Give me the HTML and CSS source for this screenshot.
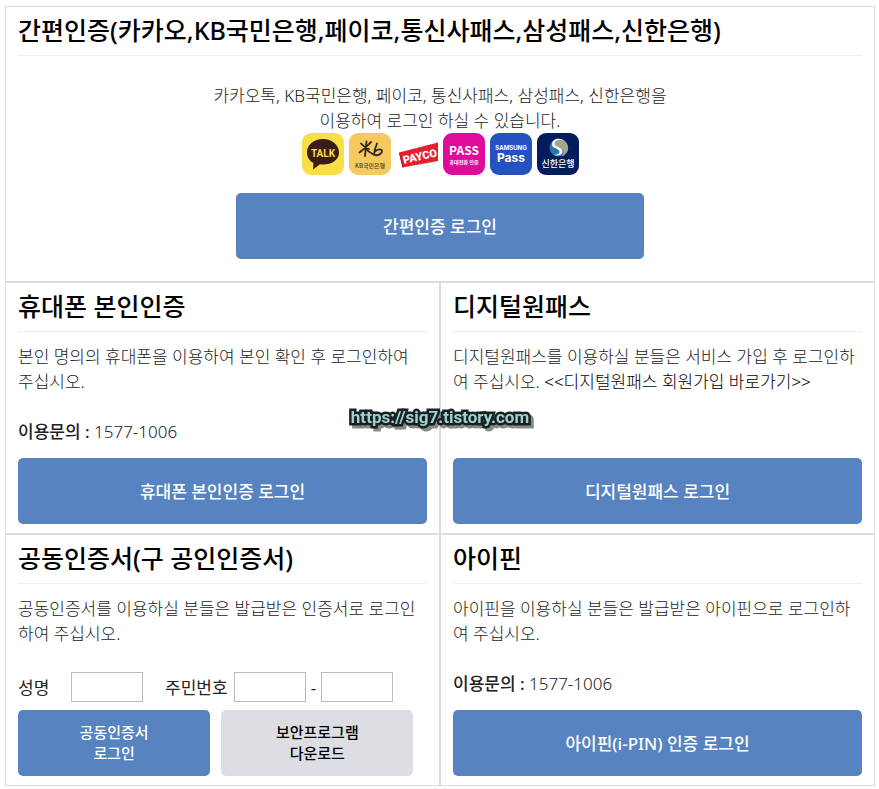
FILE: index.html
```html
<!DOCTYPE html>
<html lang="ko">
<head>
<meta charset="utf-8">
<meta name="viewport" content="width=device-width, initial-scale=1">
<title>로그인</title>
<link rel="stylesheet" href="styles.css">
</head>
<body>
<main class="login">
  <section class="card card-wide">
    <h2 class="title">간편인증(카카오,KB국민은행,페이코,통신사패스,삼성패스,신한은행)</h2>
    <p class="intro">카카오톡, KB국민은행, 페이코, 통신사패스, 삼성패스, 신한은행을<br>이용하여 로그인 하실 수 있습니다.</p>
    <div class="brands">
      <svg class="brand" viewBox="0 0 42 42" role="img" aria-label="카카오톡">
        <rect width="42" height="42" rx="9" fill="#f9df45"/>
        <path d="M21 6C12 6 5 11.500 5 19.500c0 4.800 2.600 8.400 6.500 10.600L11 36.500l7-5.200c1 .1 2 .2 3 .2 9 0 16-4.500 16-12S30 6 21 6z" fill="#3b1c1c"/>
        <text class="kakao" x="21" y="24">TALK</text>
      </svg>
      <svg class="brand" viewBox="0 0 42 42" role="img" aria-label="KB국민은행">
        <rect width="42" height="42" rx="9" fill="#f6c95f"/>
        <g fill="none" stroke="#2b2721" stroke-width="1.800" stroke-linecap="round">
          <path d="M12 10.500C14 13 17 15 20 16M22 9C19 12 16 15.500 10.500 19.500M17.500 8.500L16 23"/>
          <path d="M16.500 15C18.500 18 21 20 24.500 21.500"/>
          <path d="M28 10.500C26.500 14 25.500 17 25 21.500C28 23.500 33 21 33 18C33 15.500 28.500 16 26 18.500"/>
        </g>
        <text class="kb" x="21" y="35">KB국민은행</text>
      </svg>
      <svg class="brand" viewBox="0 0 42 42" role="img" aria-label="페이코">
        <path d="M3 19.500L42 9.500V28L6.500 34.500z" fill="#e5202e"/>
        <path d="M3.500 20L7 34.500" stroke="#b81927" stroke-width="1"/>
        <text class="payco" x="8" y="31" transform="rotate(-13 8 31)">PAYCO</text>
      </svg>
      <svg class="brand" viewBox="0 0 42 42" role="img" aria-label="통신사패스">
        <rect width="42" height="42" rx="9" fill="#de0b9b"/>
        <text class="pass" x="21" y="22">PASS</text>
        <text class="pass-sub" x="21" y="31">휴대전화 인증</text>
      </svg>
      <svg class="brand" viewBox="0 0 42 42" role="img" aria-label="삼성패스">
        <rect width="42" height="42" rx="9" fill="#2453bf"/>
        <text class="samsung" x="21" y="17">SAMSUNG</text>
        <text class="samsung-pass" x="21" y="29">Pass</text>
      </svg>
      <svg class="brand" viewBox="0 0 42 42" role="img" aria-label="신한은행">
        <rect width="42" height="42" rx="9" fill="#031c5c"/>
        <circle cx="21.500" cy="14.500" r="9" fill="#2876ad"/>
        <path d="M28 8C34 14 31 22 24 23.500C29 19 27 16 21 14.500C16 13 17 8 22 6C25 5.500 27 7 28 8z" fill="#a9a58b"/>
        <path d="M27 8C22 5 17 8 18 11.500C19 15 27 14 25.500 19.500C24.500 22.500 20 23.500 15.500 21.500C21 22.500 23.500 20 22 17.500C20 15 14 15 15 10.500C16 6 22 4 27 8z" fill="#f4f7f9"/>
        <text class="shinhan" x="21" y="34">신한은행</text>
      </svg>
    </div>
    <button type="button" class="btn btn-center">간편인증 로그인</button>
  </section>

  <section class="card">
    <h2 class="title">휴대폰 본인인증</h2>
    <p class="desc">본인 명의의 휴대폰을 이용하여 본인 확인 후 로그인하여<br>주십시오.</p>
    <p class="contact"><strong>이용문의 :</strong> 1577-1006</p>
    <button type="button" class="btn">휴대폰 본인인증 로그인</button>
  </section>

  <section class="card">
    <h2 class="title">디지털원패스</h2>
    <p class="desc">디지털원패스를 이용하실 분들은 서비스 가입 후 로그인하<br>여 주십시오. <a class="join" href="#">&lt;&lt;디지털원패스 회원가입 바로가기&gt;&gt;</a></p>
    <button type="button" class="btn">디지털원패스 로그인</button>
  </section>

  <section class="card">
    <h2 class="title">공동인증서(구 공인인증서)</h2>
    <p class="desc">공동인증서를 이용하실 분들은 발급받은 인증서로 로그인<br>하여 주십시오.</p>
    <div class="fields">
      <label class="name-label" for="name">성명</label>
      <input class="field field-name" id="name" type="text">
      <label class="id-label" for="id-front">주민번호</label>
      <input class="field" id="id-front" type="text">
      <span class="dash">-</span>
      <input class="field" id="id-back" type="password" aria-label="주민번호 뒷자리">
    </div>
    <div class="pair">
      <button type="button" class="btn btn-small">공동인증서<br>로그인</button>
      <button type="button" class="btn btn-small btn-gray">보안프로그램<br>다운로드</button>
    </div>
  </section>

  <section class="card">
    <h2 class="title">아이핀</h2>
    <p class="desc">아이핀을 이용하실 분들은 발급받은 아이핀으로 로그인하<br>여 주십시오.</p>
    <p class="contact"><strong>이용문의 :</strong> 1577-1006</p>
    <button type="button" class="btn">아이핀(i-PIN) 인증 로그인</button>
  </section>

  <div class="watermark">https://sig7.tistory.com</div>
</main>
</body>
</html>
```

FILE: styles.css
```css
* {
  box-sizing: border-box;
}

body {
  margin: 6px 4px 0 5px;
  background: #fff;
  color: #222;
  font-family: "Noto Sans", "Noto Sans CJK KR", sans-serif;
  font-size: 17px;
  font-weight: 300;
  line-height: 25px;
}

h2,
p {
  margin: 0;
}

.login {
  position: relative;
  display: grid;
  grid-template-columns: 1fr 1fr;
}

.card {
  display: flex;
  flex-direction: column;
  min-height: 252px;
  padding: 0 12px 9px;
  border: 1px solid #ddd;
}

.card-wide {
  grid-column: 1 / -1;
  align-items: center;
  padding-bottom: 22px;
}

.title {
  align-self: stretch;
  padding: 5px 0 7px;
  border-bottom: 1px solid #eee;
  color: #000;
  font-size: 25px;
  font-weight: 500;
  line-height: 36px;
}

.intro {
  margin-top: 27px;
  text-align: center;
}

.desc {
  margin-top: 12px;
  white-space: nowrap;
}

.contact {
  margin-top: 25px;
}

.contact strong {
  font-weight: 500;
}

.join {
  color: #000;
  text-decoration: none;
}

.brands {
  display: flex;
  gap: 5px;
  margin-bottom: 18px;
}

.brand {
  display: block;
  width: 42px;
  height: 42px;
}

.brand text {
  fill: #fff;
  font-family: "Noto Sans CJK KR", sans-serif;
  font-weight: 700;
  text-anchor: middle;
}

.brand .kakao {
  fill: #f9df45;
  font-family: Roboto, sans-serif;
  font-size: 10px;
}

.brand .kb {
  fill: #4a3d24;
  font-size: 6px;
  font-weight: 500;
}

.brand .payco {
  font-family: Roboto, sans-serif;
  font-size: 11px;
  font-weight: 900;
  text-anchor: start;
}

.brand .pass {
  font-size: 12px;
}

.brand .pass-sub {
  font-size: 5px;
}

.brand .samsung {
  font-family: Inter, sans-serif;
  font-size: 6px;
}

.brand .samsung-pass {
  font-family: Inter, sans-serif;
  font-size: 12px;
}

.brand .shinhan {
  font-size: 9px;
  font-weight: 500;
}

.btn {
  height: 66px;
  margin-top: auto;
  padding: 0;
  border: 0;
  border-radius: 5px;
  background: #5783c1;
  color: #fff;
  font-family: inherit;
  font-size: 17px;
  font-weight: 500;
  line-height: 25px;
}

.btn-center {
  width: 408px;
  max-width: 100%;
}

.pair {
  display: flex;
  gap: 11px;
  margin-top: auto;
}

.btn-small {
  width: 47%;
  font-size: 15px;
  line-height: 21px;
}

.btn-gray {
  background: #dddee4;
  color: #000;
}

.fields {
  display: flex;
  align-items: center;
  margin-top: 26px;
  font-weight: 400;
}

.name-label {
  width: 53px;
}

.field {
  width: 72px;
  height: 30px;
  padding: 0 4px;
  border: 1px solid #bbb;
  background: #fff;
  font: inherit;
}

.field-name {
  margin-right: 22px;
}

.id-label {
  width: 69px;
}

.dash {
  width: 15px;
  text-align: center;
}

.watermark {
  position: absolute;
  top: 399px;
  left: 50%;
  transform: translateX(-50%);
  color: #9dd0d2;
  font-family: Roboto, sans-serif;
  font-size: 17px;
  font-weight: 700;
  -webkit-text-stroke: 5px #182020;
  paint-order: stroke fill;
  filter: drop-shadow(3px 3px 0 #888);
}
```
